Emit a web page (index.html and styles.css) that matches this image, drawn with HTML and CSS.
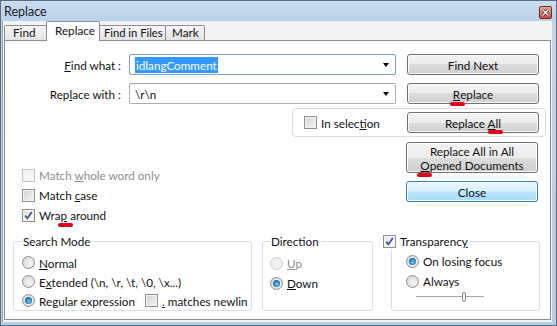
FILE: index.html
```html
<!DOCTYPE html>
<html lang="en">
<head>
  <meta charset="UTF-8">
  <title>Replace</title>
  <link rel="stylesheet" href="styles.css">
</head>
<body>
  <div class="window">
    <div class="titlebar">
      <span class="title">Replace</span>
      <svg class="close-x" width="13" height="13" viewBox="0 0 13 13">
        <defs>
          <linearGradient id="cg" x1="0" y1="0" x2="0" y2="1">
            <stop offset="0" stop-color="#e9b1a6"/>
            <stop offset="1" stop-color="#c4513d"/>
          </linearGradient>
        </defs>
        <rect x="0.5" y="0.5" width="12" height="12" rx="1.5" fill="url(#cg)" stroke="#6e2b20"/>
        <path d="M3.5 3.5 L9.5 9.5 M9.5 3.5 L3.5 9.5" stroke="#5a2218" stroke-width="3"/>
        <path d="M3.5 3.5 L9.5 9.5 M9.5 3.5 L3.5 9.5" stroke="#fff" stroke-width="1.4"/>
      </svg>
    </div>

    <div class="client">
      <div class="tabs">
        <div class="tab tab-find">Find</div>
        <div class="tab tab-replace active">Replace</div>
        <div class="tab tab-files">Find in Files</div>
        <div class="tab tab-mark">Mark</div>
      </div>

      <div class="panel">
        <div class="field-row">
          <span class="field-label"><u>F</u>ind what :</span>
          <div class="combo focused">
            <span class="combo-text"><span class="sel">idlangComment</span></span>
            <span class="arrow"></span>
          </div>
          <button class="btn">Find Next</button>
        </div>

        <div class="field-row second">
          <span class="field-label">Rep<u>l</u>ace with :</span>
          <div class="combo">
            <span class="combo-text">\r\n</span>
            <span class="arrow"></span>
          </div>
          <button class="btn"><u class="mark">R</u>eplace</button>
        </div>

        <div class="selection-box">
          <span class="option"><span class="check"></span><span>In selec<u>t</u>ion</span></span>
          <button class="btn">Replace <u class="mark mark-all">A</u>ll</button>
        </div>

        <div class="middle">
          <div class="options">
            <span class="option disabled"><span class="check"></span><span>Match <u>w</u>hole word only</span></span>
            <span class="option"><span class="check"></span><span>Match <u>c</u>ase</span></span>
            <span class="option"><span class="check checked"><svg width="11" height="11" viewBox="0 0 11 11"><path d="M2.2 5.6 L4.4 8.4 L8.8 2" fill="none" stroke="#3f4f8c" stroke-width="1.7"/></svg></span><span>Wra<u class="mark">p</u> around</span></span>
          </div>
          <div class="side-buttons">
            <button class="btn tall">Replace All in All<br><u class="mark">O</u>pened Documents</button>
            <button class="btn default">Close</button>
          </div>
        </div>

        <div class="groups">
          <fieldset class="group search-mode">
            <legend>Search Mode</legend>
            <span class="option"><span class="radio"></span><span><u>N</u>ormal</span></span>
            <span class="option"><span class="radio"></span><span>E<u>x</u>tended (\n, \r, \t, \0, \x...)</span></span>
            <span class="option"><span class="radio on"></span><span>Re<u>g</u>ular expression</span><span class="check newline"></span><span><u>.</u> matches newlin</span></span>
          </fieldset>

          <fieldset class="group direction">
            <legend>Direction</legend>
            <span class="option disabled"><span class="radio"></span><span><u>U</u>p</span></span>
            <span class="option"><span class="radio on"></span><span><u>D</u>own</span></span>
          </fieldset>

          <fieldset class="group transparency">
            <legend><span class="check checked"><svg width="11" height="11" viewBox="0 0 11 11"><path d="M2.2 5.6 L4.4 8.4 L8.8 2" fill="none" stroke="#3f4f8c" stroke-width="1.7"/></svg></span><span>Transparenc<u>y</u></span></legend>
            <span class="option"><span class="radio on"></span><span>On losing focus</span></span>
            <span class="option"><span class="radio"></span><span>Always</span></span>
            <div class="slider"><span class="thumb"></span></div>
          </fieldset>
        </div>
      </div>
    </div>
  </div>
</body>
</html>
```

FILE: styles.css
```css
body {
  margin: 0;
  background: #fff;
  font-family: 'Lato', 'Noto Sans', sans-serif;
  font-size: 11.7px;
  color: #111;
}

.window {
  width: 557px;
  height: 326px;
  box-sizing: border-box;
  border: 1px solid #5b6c80;
  background: linear-gradient(#c3d7ec, #b6cde6);
  display: flex;
  flex-direction: column;
}

.titlebar {
  height: 20px;
  display: flex;
  align-items: center;
  justify-content: space-between;
  padding: 0 4px 0 3px;
  background: linear-gradient(#cadcef, #bad1e9);
}

.title {
  font-size: 12.5px;
  color: #1b1b1b;
}

.close-x {
  margin-top: 2px;
}

.client {
  flex: 1;
  display: flex;
  flex-direction: column;
  margin: 0 4px 3px 1px;
  padding: 0 1px 2px 1px;
  background: #f4f4f4;
  border-left: 1px solid #9aa5b1;
}

/* tabs */
.tabs {
  display: flex;
  align-items: flex-end;
  height: 19px;
}

.tab {
  box-sizing: border-box;
  height: 15px;
  margin-right: -1px;
  padding-left: 8px;
  line-height: 13px;
  white-space: nowrap;
  overflow: hidden;
  border: 1px solid #898c95;
  border-bottom: none;
  border-radius: 2px 2px 0 0;
  background: linear-gradient(#f6f6f6, #e3e3e3);
}

.tab-find { width: 43px; }
.tab-replace { width: 54px; }
.tab-files { width: 67px; padding-left: 4px; font-size: 11.2px; }
.tab-mark { width: 40px; padding-left: 6px; }

.tab.active {
  position: relative;
  z-index: 1;
  height: 20px;
  margin-bottom: -1px;
  padding-top: 2px;
  background: #fff;
}

.panel {
  flex: 1;
  background: #fff;
  border: 1px solid #898c95;
  padding-top: 13px;
}

/* find / replace rows */
.field-row {
  display: flex;
  align-items: center;
  height: 21px;
}

.field-row.second {
  margin-top: 8px;
}

.field-label {
  width: 118px;
  padding-right: 2px;
  box-sizing: border-box;
  text-align: right;
  margin-right: 6px;
}

.combo {
  width: 267px;
  height: 21px;
  box-sizing: border-box;
  border: 1px solid #abadb3;
  border-top-color: #a3a6ae;
  border-radius: 2px;
  display: flex;
  align-items: center;
  justify-content: space-between;
  padding: 0 6px 0 5px;
}

.combo.focused {
  border-color: #7e9dc2;
}

.sel {
  background: #3399ff;
  color: #fff;
  padding: 1px 1px;
}

.arrow {
  width: 0;
  height: 0;
  border-left: 3px solid transparent;
  border-right: 3px solid transparent;
  border-top: 4px solid #000;
}

.btn {
  width: 132px;
  height: 21px;
  margin-left: 11px;
  padding: 0;
  font-family: inherit;
  font-size: 11.7px;
  color: #111;
  border: 1px solid #707070;
  border-radius: 3px;
  background: linear-gradient(#f3f3f3 0%, #ebebeb 50%, #dddddd 50%, #cfcfcf 100%);
  box-shadow: inset 0 0 0 1px #fbfbfb;
}

.btn.tall {
  height: 31px;
  line-height: 14px;
}

.btn.default {
  border-color: #3c7fb1;
  background: linear-gradient(#eaf6fd 0%, #d9f0fc 50%, #bee6fd 50%, #a7d9f5 100%);
  box-shadow: inset 0 0 0 1px #f4fbff;
}

/* red annotation marks */
.mark {
  position: relative;
}

.mark::after {
  content: '';
  position: absolute;
  left: -3px;
  top: calc(100% + 1px);
  width: 15px;
  height: 4px;
  border-radius: 2px;
  background: #e0001b;
}

.mark-all::after {
  left: 0;
  top: 100%;
}

/* in selection */
.selection-box {
  display: flex;
  align-items: center;
  width: 254px;
  height: 29px;
  box-sizing: border-box;
  margin: 4px 0 0 287px;
  padding-left: 11px;
  border: 1px solid #dcdcdc;
  border-radius: 4px;
}

.selection-box .btn {
  margin-left: auto;
  margin-right: 6px;
}

/* checkboxes and radios */
.option {
  display: flex;
  align-items: center;
  height: 20px;
  white-space: nowrap;
}

.option.disabled {
  color: #8d8d8d;
}

.check {
  display: inline-flex;
  flex: none;
  align-items: center;
  justify-content: center;
  width: 13px;
  height: 13px;
  box-sizing: border-box;
  margin-right: 4px;
  border: 1px solid #8e8f8f;
  background: linear-gradient(135deg, #cfd2d6, #f6f6f6);
  box-shadow: inset 0 0 0 1px #f4f4f4;
}

.check.checked {
  background: linear-gradient(135deg, #e4e6e8, #fafafa);
}

.disabled .check {
  border-color: #c4c4c4;
  background: #f4f4f4;
}

.radio {
  display: inline-flex;
  flex: none;
  align-items: center;
  justify-content: center;
  width: 13px;
  height: 13px;
  box-sizing: border-box;
  margin-right: 4px;
  border: 1px solid #8e8f8f;
  border-radius: 50%;
  background: radial-gradient(circle at 60% 60%, #f6f6f6 0%, #e1e1e1 60%, #cfcfcf 100%);
}

.radio.on::after {
  content: '';
  width: 7px;
  height: 7px;
  border-radius: 50%;
  background: radial-gradient(circle at 55% 60%, #7fd2f6 0%, #2b86c0 45%, #1a4a78 100%);
}

.disabled .radio {
  border-color: #c8c8c8;
  background: #f2f2f2;
}

/* middle area */
.middle {
  display: flex;
}

.options {
  margin-left: 17px;
  padding-top: 28px;
}

.side-buttons {
  margin: 5px 12px 0 auto;
  display: flex;
  flex-direction: column;
  gap: 8px;
}

.side-buttons .btn {
  margin-left: 0;
}

/* group boxes */
.groups {
  display: flex;
  margin-top: 9px;
}

.group {
  box-sizing: border-box;
  height: 77px;
  margin: 0;
  padding: 4px 0 0 8px;
  border: 1px solid #d5dfe5;
  border-radius: 3px;
  min-width: 0;
}

.group legend {
  padding: 0 2px 0 1px;
  line-height: 15px;
}

.search-mode {
  width: 239px;
  margin-left: 8px;
  overflow: hidden;
}

.search-mode .option {
  height: 19px;
}

.newline {
  margin-left: 10px;
}

.direction {
  width: 111px;
  margin-left: 10px;
  padding-left: 7px;
}

.transparency {
  width: 149px;
  margin-left: 18px;
  padding: 2px 0 0 14px;
}

.transparency legend {
  display: flex;
  align-items: center;
  margin-left: -23px;
  padding-left: 0;
}

.slider {
  position: relative;
  width: 68px;
  height: 2px;
  margin: 5px 0 0 10px;
  border-top: 1px solid #a9a9a9;
  border-bottom: 1px solid #f8f8f8;
  background: #e4e4e4;
  box-sizing: border-box;
}

.thumb {
  position: absolute;
  left: 46px;
  top: -5px;
  width: 4px;
  height: 10px;
  box-sizing: border-box;
  border: 1px solid #8a8a8a;
  border-radius: 2px;
  background: #f4f4f4;
}
```
